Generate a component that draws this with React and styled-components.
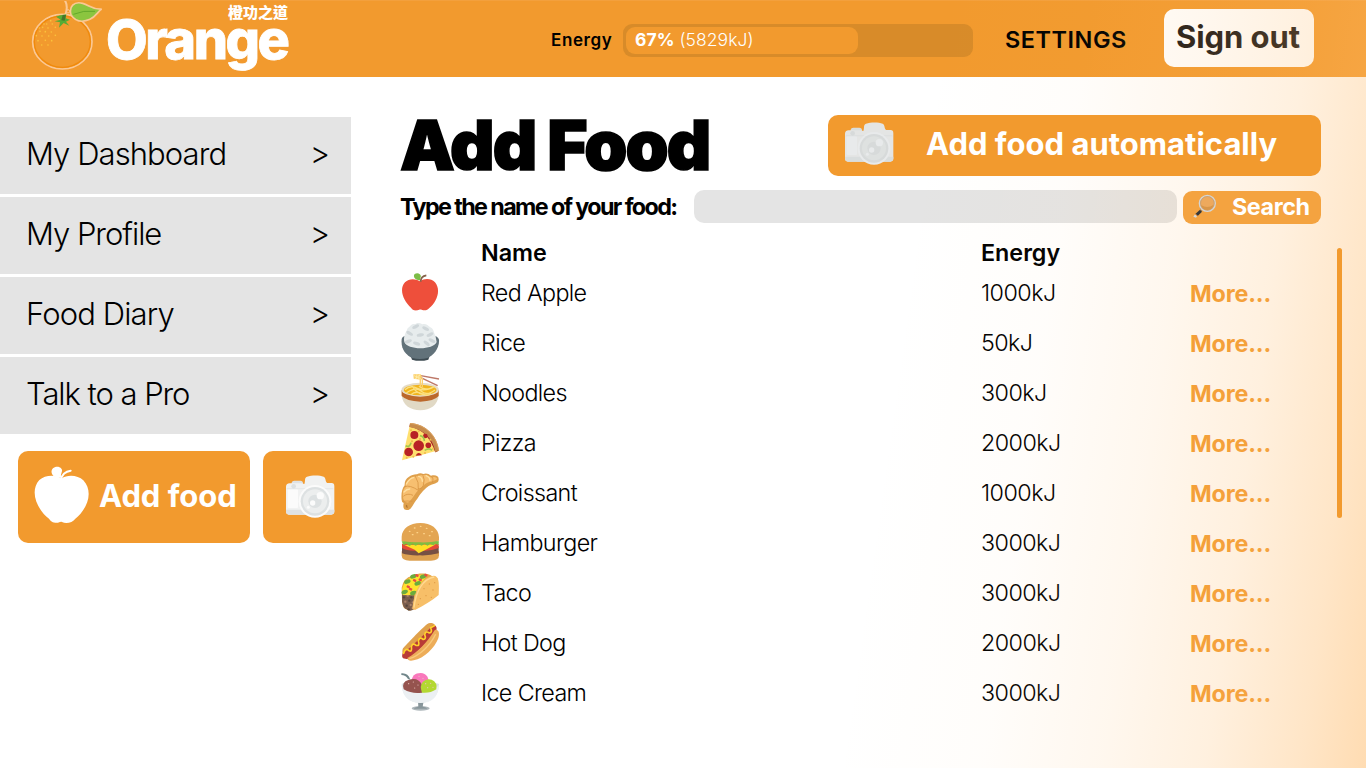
import React from "react";
import styled, { createGlobalStyle } from "styled-components";

const ORANGE = "#f29a2e";

const GlobalStyle = createGlobalStyle`
  * { box-sizing: border-box; }
  body { margin: 0; background: #fff; }
  button, input { font: inherit; border: 0; padding: 0; margin: 0; }
  svg { display: block; flex: none; }
`;

const Page = styled.div`
  position: relative;
  width: 1366px;
  height: 768px;
  overflow: hidden;
  background: #fff;
  color: #000;
  font-family: Inter, "Liberation Sans", "Noto Sans CJK TC", sans-serif;
`;

const Glow = styled.div`
  position: absolute;
  inset: 0;
  z-index: 1;
  pointer-events: none;
  background: linear-gradient(
    98deg,
    rgba(255, 188, 108, 0) 64%,
    rgba(255, 188, 108, 0.03) 74%,
    rgba(255, 188, 108, 0.115) 82%,
    rgba(255, 188, 108, 0.22) 89%,
    rgba(255, 188, 108, 0.38) 95.5%,
    rgba(255, 188, 108, 0.52) 100%
  );
`;

const Header = styled.header`
  display: flex;
  align-items: flex-start;
  height: 77px;
  background: ${ORANGE};
  border-top: 1px solid #f3a03d;
`;

const Brand = styled.div`
  display: flex;
  width: 551px;
  height: 76px;
  padding-left: 30px;
`;

const BrandText = styled.div`
  display: flex;
  flex-direction: column;
  align-items: flex-end;
  width: 182px;
  color: #fff;
`;

const BrandTag = styled.span`
  height: 15px;
  margin-top: 3px;
  font: 900 15px/15px "Noto Sans CJK TC", sans-serif;
  white-space: nowrap;
`;

const BrandName = styled.span`
  align-self: flex-start;
  font-size: 54px;
  font-weight: 800;
  line-height: 42px;
  letter-spacing: -2.5px;
  -webkit-text-stroke: 0.8px #fff;
  white-space: nowrap;
`;

const EnergyLabel = styled.span`
  width: 72px;
  margin-top: 28px;
  font-size: 17px;
  font-weight: 600;
  line-height: 22px;
  letter-spacing: 0.6px;
`;

const EnergyTrack = styled.div`
  width: 350px;
  height: 33px;
  margin-top: 23px;
  padding: 3px;
  border-radius: 9px;
  background: #d88b29;
`;

const EnergyFill = styled.div`
  height: 27px;
  padding-left: 9px;
  border-radius: 9px;
  background: ${ORANGE};
  color: #fff;
  font-size: 17.5px;
  font-weight: 300;
  line-height: 26px;
  letter-spacing: 0.05px;
  white-space: nowrap;
  b { font-weight: 700; }
`;

const Settings = styled.a`
  width: 159px;
  margin: 24px 0 0 32px;
  font-size: 23.5px;
  font-weight: 600;
  line-height: 30px;
  letter-spacing: 0.5px;
  white-space: nowrap;
`;

const SignOut = styled.button`
  width: 150px;
  height: 58px;
  margin-top: 8px;
  padding: 0 2px 4px 0;
  border-radius: 10px;
  background: #fff;
  color: #1b1715;
  font-size: 31px;
  font-weight: 650;
  letter-spacing: -0.05px;
  white-space: nowrap;
`;

const Body = styled.div`
  display: flex;
  align-items: flex-start;
`;

const Sidebar = styled.nav`
  width: 401px;
  padding-top: 40px;
`;

const NavItem = styled.a`
  display: flex;
  justify-content: space-between;
  width: 351px;
  height: 77px;
  margin-bottom: 3px;
  padding: 0 21px 0 26px;
  background: #e4e4e4;
  font-size: 31px;
  font-weight: 300;
  line-height: 74px;
  white-space: nowrap;
`;

const NavLabel = styled.span`
  letter-spacing: ${(p) => p.$spacing}px;
`;

const Chevron = styled.span`
  font-size: 31px;
  line-height: 72px;
`;

const QuickActions = styled.div`
  display: flex;
  gap: 13px;
  padding: 14px 0 0 18px;
`;

const QuickButton = styled.button`
  display: flex;
  align-items: flex-start;
  width: ${(p) => p.$width}px;
  height: 92px;
  padding: ${(p) => p.$pad};
  border-radius: 10px;
  background: ${ORANGE};
  color: #fff;
  font-size: 31px;
  font-weight: 700;
  line-height: 60px;
  letter-spacing: -0.05px;
  white-space: nowrap;
`;

const QuickLabel = styled.span`
  margin-left: 9px;
`;

const Main = styled.main`
  width: 941px;
  padding-top: 38px;
`;

const TitleRow = styled.div`
  display: flex;
  width: 920px;
  height: 61px;
`;

const Title = styled.h1`
  width: 428px;
  margin: 0 0 0 -1px;
  font-size: 69px;
  font-weight: 900;
  line-height: 61px;
  letter-spacing: -1.9px;
  -webkit-text-stroke: 1.6px #000;
  white-space: nowrap;
`;

const AutoButton = styled.button`
  position: relative;
  z-index: 2;
  display: flex;
  width: 493px;
  height: 61px;
  padding: 7px 0 0 16px;
  border-radius: 10px;
  background: ${ORANGE};
  color: #fff;
`;

const AutoLabel = styled.span`
  margin-left: 32px;
  font-size: 31px;
  font-weight: 700;
  line-height: 43px;
  white-space: nowrap;
`;

const SearchRow = styled.form`
  display: flex;
  width: 920px;
  height: 34px;
  margin-top: 14px;
`;

const SearchLabel = styled.label`
  width: 294px;
  margin-left: -1px;
  font-size: 23.3px;
  font-weight: 650;
  line-height: 34px;
  letter-spacing: -1.6px;
  white-space: nowrap;
`;

const SearchInput = styled.input`
  width: 483px;
  height: 33px;
  padding: 0 12px;
  border-radius: 10px;
  background: #e4e4e4;
`;

const SearchButton = styled.button`
  position: relative;
  z-index: 2;
  display: flex;
  width: 138px;
  height: 33px;
  margin: 1px 0 0 6px;
  padding: 2px 0 0 9px;
  border-radius: 9px;
  background: #f4a340;
  color: #fff;
  font-size: 23.3px;
  font-weight: 700;
  line-height: 28px;
  letter-spacing: -0.4px;
  white-space: nowrap;
`;

const SearchText = styled.span`
  margin-left: 16px;
`;

const Results = styled.div`
  display: flex;
  justify-content: space-between;
  margin-top: 14px;
`;

const Table = styled.div`
  width: 920px;
  padding-top: 2px;
`;

const Row = styled.div`
  display: grid;
  grid-template-columns: 80px 500px 209px 1fr;
  height: ${(p) => (p.$head ? 28 : 50)}px;
  font-size: 23.3px;
  font-weight: ${(p) => (p.$head ? 600 : 300)};
  line-height: ${(p) => (p.$head ? 26 : 50)}px;
`;

const IconCell = styled.span`
  padding-top: 5px;
`;

const Cell = styled.span`
  letter-spacing: ${(p) => p.$spacing || 0}px;
  white-space: nowrap;
`;

const More = styled.a`
  color: ${ORANGE};
  font-weight: 700;
  line-height: 52px;
  letter-spacing: -0.15px;
  white-space: nowrap;
`;

const Scrollbar = styled.div`
  position: relative;
  z-index: 2;
  width: 5px;
  height: 270px;
  margin-top: 10px;
  border-radius: 3px;
  background: ${ORANGE};
`;

function OrangeLogo() {
  const dots = [
    [152, 62], [140, 72], [157, 72], [128, 82], [144, 84], [166, 82], [120, 94], [136, 95],
    [154, 96], [109, 107], [126, 108], [146, 108], [166, 106], [114, 122], [136, 121],
    [155, 122], [125, 135], [144, 135], [132, 72], [118, 84],
  ];
  return (
    <svg width="76" height="76" viewBox="90 3 228 228">
      <path d="M196 44C202 28 203 14 194 0" fill="none" stroke="#fbc894" strokeWidth="6" />
      <ellipse cx="187" cy="125" rx="89" ry="82" fill="#f29a2e" stroke="#fbc894" strokeWidth="5" />
      <ellipse cx="187" cy="125" rx="84" ry="77" fill="none" stroke="#f08a0c" strokeWidth="4" />
      {dots.map(([x, y]) => <circle key={`${x}-${y}`} cx={x} cy={y} r="2.5" fill="#fbc23c" />)}
      <path d="M213 45C206 20 222 3 248 10C268 15 276 29 305 27C294 34 288 50 270 58C247 68 226 64 213 45Z" fill="#8bc53f" stroke="#fbc894" strokeWidth="5" />
      <path d="M220 43Q250 30 285 34" fill="none" stroke="#64a92b" strokeWidth="3" />
      <path d="M182 46L199 43 197 55 210 59 198 65 208 77 191 69 177 83 180 67 164 64 182 59 168 50Z" fill="#55ac35" />
      <path d="M184 61L188 45H198L194 62Z" fill="#45752b" />
      <circle cx="204" cy="34" r="5" fill="none" stroke="#fbc894" strokeWidth="3" />
    </svg>
  );
}

function CameraIcon({ muted }) {
  const body = muted ? "#e4e5e4" : "#f1f2f2";
  const edge = muted ? "#d9dddd" : "#dfe2e4";
  const lens = muted ? "#d7dada" : "#dde1e2";
  const light = muted ? "#e8eaeb" : "#fbfbfb";
  return (
    <svg width="50" height="43" viewBox="0 0 150 129">
      <rect x="20" y="17" width="34" height="20" rx="8" fill={edge} />
      <path d="M58 27C62 18 57 9 66 5C80 0 104 0 116 5C124 9 120 21 127 24H140Q148 24 148 34V109Q148 119 139 119H11Q3 119 3 109V36Q3 25 14 25H51Q56 27 58 27Z" fill={body} />
      <path d="M3 104V109Q3 119 13 119H138Q148 119 148 109V104Z" fill={edge} />
      <rect x="8" y="43" width="31" height="56" rx="3" fill={light} />
      <path d="M5 41H145" stroke={edge} strokeWidth="2" />
      <circle cx="26" cy="34" r="7" fill={lens} />
      <circle cx="90" cy="79" r="49" fill={light} />
      <circle cx="90" cy="79" r="43" fill={lens} />
      <circle cx="90" cy="79" r="36" fill={muted ? "#dee1e0" : "#eceeee"} />
      <circle cx="90" cy="79" r="20" fill={lens} />
      <circle cx="106" cy="62" r="11" fill={light} />
      <circle cx="83" cy="84" r="8" fill={light} />
      <circle cx="70" cy="97" r="4.5" fill={light} />
    </svg>
  );
}

function WhiteApple() {
  return (
    <svg width="56" height="58" viewBox="2 0 168 174" fill="#fff">
      <path d="M84 38C104 24 134 28 150 43C184 80 158 133 126 158C118 170 98 175 86 168C80 165 77 172 66 170C54 168 52 164 47 158C12 132-13 76 18 42C34 28 65 24 84 38Z" />
      <path d="M75 35C55 34 49 15 60 6C72-3 88 5 86 15C84 24 81 28 84 35Z" />
      <path d="M82 42Q88 17 112 14" fill="none" stroke="#fff" strokeWidth="6" strokeLinecap="round" />
    </svg>
  );
}

function MagnifierIcon() {
  return (
    <svg width="24" height="26" viewBox="0 -2 72 78">
      <path d="M10 61L24 48 30 54 17 67Z" fill="#35383a" />
      <path d="M9 62L15 68 12 72 4 69Z" fill="#d5d8da" />
      <path d="M11 61L17 67" stroke="#e78b38" strokeWidth="2" />
      <path d="M24 47L34 38M28 51L36 43" stroke="#777" strokeWidth="3" />
      <circle cx="46" cy="29" r="24" fill="#eda95d" stroke="#d3d5d6" strokeWidth="4" />
      <circle cx="46" cy="29" r="20.5" fill="none" stroke="#a5988a" strokeWidth="1.5" />
      <path d="M27 34Q46 46 65 33Q60 49 46 49Q31 49 27 34Z" fill="#d99648" />
    </svg>
  );
}

const Food = ({ children }) => (
  <svg width="39" height="39" viewBox="1 0 117 117">{children}</svg>
);

const RedApple = () => (
  <Food>
    <path d="M58 25C72 15 91 16 103 28C123 52 107 88 86 105C80 112 72 114 63 110C58 108 56 110 51 112C40 114 34 109 31 104C10 87-7 50 13 28C25 16 45 17 58 25Z" fill="#ee4f3b" />
    <path d="M56 22C42 21 36 10 42 3C52-3 63 4 60 13Q57 19 59 23Z" fill="#7dbd47" />
    <path d="M60 26Q60 10 77 7" fill="none" stroke="#856249" strokeWidth="5" />
  </Food>
);

const Rice = () => (
  <Food>
    <path d="M31 102H86L83 110Q58 117 34 110Z" fill="#3e4b52" />
    <path d="M3 49C5 39 12 35 58 35S111 39 115 50C117 75 99 96 81 105Q58 111 34 105C14 95 0 76 3 49Z" fill="#62727a" />
    <path d="M10 51C10 33 18 25 21 16C31 8 34 1 43 4C50-3 59 0 65 4C76 1 82 8 89 13C101 19 99 31 104 37L108 57C98 82 20 82 11 57Z" fill="#e7eced" />
    {[[45, 11, -25], [75, 17, 25], [27, 31, 30], [59, 36, -10], [88, 35, -25], [23, 55, -20], [48, 62, 18], [78, 61, 40], [94, 53, 25]].map(([x, y, r]) => (
      <ellipse key={`${x}-${y}`} cx={x} cy={y} rx="11" ry="5" fill="#cfd6d9" transform={`rotate(${r} ${x} ${y})`} />
    ))}
  </Food>
);

const Noodles = () => (
  <Food>
    <path d="M3 53V66C5 96 29 112 59 112S112 96 114 66V53Z" fill="#e1d9c5" />
    <path d="M3 51V69Q17 84 59 86Q101 84 114 69V51Z" fill="#bb682c" />
    <ellipse cx="58.500" cy="50" rx="56" ry="21" fill="#e5dcc7" />
    <ellipse cx="58.500" cy="51" rx="49" ry="16" fill="#f0b41e" />
    <path d="M13 50Q29 35 50 46T101 41M17 60Q45 40 62 55T103 51M35 39Q46 61 69 65M31 65Q44 52 64 62T91 60M55 40Q67 51 89 46" fill="none" stroke="#fce07f" strokeWidth="4" />
    <path d="M56 7L115 18M59 13L111 38" stroke="#bd7868" strokeWidth="4" />
    <path d="M38 4L60 3 64 11 62 20 39 17Z" fill="#fbd06e" />
    <path d="M59 15V43M65 15V43" stroke="#fbd06e" strokeWidth="4" />
    <path d="M40 8L60 17M43 17L61 4M49 3L46 19M56 3L54 20" stroke="#fff1b5" strokeWidth="2" />
  </Food>
);

const Pizza = () => (
  <Food>
    <path d="M4 112L27 8Q85 17 106 84L4 112Z" fill="#ffe06f" />
    <path d="M27 8Q84 17 107 87" fill="none" stroke="#a71b24" strokeWidth="7" />
    <path d="M28 0C78 4 110 40 115 83L104 88C98 47 69 19 26 12Z" fill="#c68b4b" />
    <path d="M28 1C78 5 108 40 114 83" fill="none" stroke="#dca362" strokeWidth="3" />
    {[[41, 36, 12], [54, 68, 16], [24, 87, 13], [83, 67, 8.500], [74, 39, 7]].map(([x, y, r]) => <circle key={x} cx={x} cy={y} r={r} fill="#b82226" />)}
    <path d="M45 98Q50 85 62 94L64 97Z" fill="#b82226" />
    <path d="M58 38Q71 41 71 54M15 68Q28 75 31 59M72 82Q86 73 94 82" fill="none" stroke="#9fc74d" strokeWidth="5" />
    {[[31, 22], [54, 25], [34, 55], [58, 48], [73, 90], [38, 101], [89, 50], [97, 77], [18, 104]].map(([x, y]) => <circle key={`${x}-${y}`} cx={x} cy={y} r="3" fill="#efb94e" />)}
  </Food>
);

const Croissant = () => (
  <Food>
    <path d="M3 81C1 67 3 47 12 37C10 15 34 3 49 4Q58-2 68 3Q80-1 91 8C104 5 115 8 114 20C113 33 97 30 84 39Q65 52 50 77C37 91 33 113 18 111C7 111 7 100 9 90Q3 89 3 81Z" fill="#dfa04c" />
    <path d="M7 73Q4 52 15 41C13 22 36 8 49 10Q75 0 93 14Q105 8 110 18C96 28 83 23 67 39C43 57 39 74 24 88Q9 91 7 73Z" fill="#f7bf70" />
    <path d="M13 41Q27 35 53 52Q56 27 43 8M52 47Q64 49 68 37Q74 20 66 4M92 10Q101 16 94 30M8 70Q21 59 37 67M7 85Q21 83 35 85" fill="none" stroke="#d99543" strokeWidth="2.500" />
    <path d="M17 33Q28 14 39 14M54 10Q65 13 65 25M76 8Q88 13 88 22M10 57Q18 48 27 48" fill="none" stroke="#ffe0a1" strokeWidth="4" strokeLinecap="round" />
    <path d="M18 96Q16 102 21 103" fill="none" stroke="#b57732" strokeWidth="4" />
  </Food>
);

const Hamburger = () => (
  <Food>
    <path d="M3 85H115V97Q115 113 91 113H27Q3 113 3 97Z" fill="#dda151" />
    <path d="M4 70Q58 60 114 70V91Q88 98 58 97Q25 98 4 91Z" fill="#765044" />
    <path d="M4 62Q59 54 114 62V75Q86 86 58 82Q22 86 4 75Z" fill="#e44936" />
    <path d="M11 66L106 64 75 80 54 91 42 80Z" fill="#ffdf24" />
    <path d="M3 55Q59 48 115 55L113 66 104 62 98 67 88 63 81 68 71 63 63 68 54 64 45 68 36 64 26 69 18 63 8 66Z" fill="#7fbd42" />
    <path d="M3 54V41C4 17 27 0 59 0S114 17 115 42V53Q91 59 59 58Q23 58 3 54Z" fill="#e3a552" />
    {[[27, 25], [42, 15], [60, 10], [78, 16], [94, 26], [50, 29], [70, 32], [36, 35], [87, 38]].map(([x, y]) => <ellipse key={x} cx={x} cy={y} rx="3" ry="2" fill="#ffd68d" />)}
  </Food>
);

const Taco = () => (
  <Food>
    <path d="M3 44Q8 14 35 8C60-3 89 2 98 13L40 108Q27 116 16 109C5 104 6 91 4 84Z" fill="#e6a846" />
    <path d="M4 62L41 54 40 109Q27 118 17 108C8 106 7 95 4 86Z" fill="#7a5d4d" />
    {[[10, 73], [21, 68], [32, 73], [14, 86], [26, 83], [37, 88], [18, 98], [30, 96], [24, 109], [36, 105]].map(([x, y], i) => <circle key={i} cx={x} cy={y} r="3.500" fill={i % 2 ? "#a9806a" : "#54443d"} />)}
    <path d="M4 49Q11 23 27 16L52 5 83 5 61 29 41 67 6 66Z" fill="#ffe22f" />
    {[[12, 57], [38, 60], [20, 26], [51, 31], [67, 11], [38, 10]].map(([x, y]) => <ellipse key={x} cx={x} cy={y} rx="10" ry="6" fill="#6cab3d" transform={`rotate(-20 ${x} ${y})`} />)}
    {[[23, 41], [42, 22], [59, 20], [76, 6], [49, 7], [30, 48]].map(([x, y]) => <rect key={x} x={x - 5} y={y - 3} width="10" height="7" rx="2" fill="#e94c42" transform={`rotate(25 ${x} ${y})`} />)}
    <path d="M35 108C39 53 62 15 99 8C114 9 116 23 114 66C95 83 70 97 43 111Z" fill="#f7bf68" />
    <path d="M40 104C46 53 67 18 101 12" fill="none" stroke="#ffda91" strokeWidth="4" />
    {[[70, 47], [86, 33], [97, 51], [76, 68], [59, 77], [92, 73], [102, 29], [53, 94]].map(([x, y]) => <circle key={x} cx={x} cy={y} r="2" fill="#df9a44" />)}
  </Food>
);

const HotDog = () => (
  <Food>
    <path d="M7 76C19 64 59 19 80 3C91-4 105 1 106 14L24 104C9 102 1 90 7 76Z" fill="#e0a14c" />
    <path d="M6 91C42 65 71 33 97 7C110 7 111 19 102 32C77 62 51 87 22 108C5 109 2 103 6 91Z" fill="#b93b36" />
    <path d="M20 105C51 87 78 60 103 20C116 19 117 32 113 46C101 76 71 106 39 112Q22 116 20 105Z" fill="#edad59" />
    <path d="M26 107C56 98 88 69 105 34" fill="none" stroke="#f9ca7d" strokeWidth="4" />
    <path d="M9 91Q15 72 25 83Q35 88 32 71Q36 58 46 67Q59 70 53 54Q57 40 67 49Q78 50 72 35Q75 22 86 30Q96 29 90 14L101 8" fill="none" stroke="#ffd12c" strokeWidth="5" strokeLinecap="round" />
  </Food>
);

const IceCream = () => (
  <Food>
    <ellipse cx="60" cy="106" rx="27" ry="7" fill="#adb6ba" />
    <path d="M52 84H69L66 101Q78 103 80 107H39Q43 103 53 101Z" fill="#88969b" />
    <path d="M3 34Q3 27 58 28T115 34C114 68 94 90 59 90S4 67 3 34Z" fill="#dbe3e6" />
    <path d="M33 27C32 10 43 0 60 0C78 1 85 14 84 32L60 45Z" fill="#f978bc" />
    <path d="M3 34C12 67 102 68 114 34V44C109 75 91 90 59 90S6 72 3 40Z" fill="#eef2f4" opacity=".85" />
    <path d="M9 49Q2 26 23 21Q52 11 64 36V59Q35 64 9 49Z" fill="#95534e" />
    <path d="M64 59Q56 39 66 27Q78 15 93 20Q111 28 107 49Q87 62 64 59Z" fill="#b3d832" />
    <path d="M2 1Q22-1 29 20L22 18Q15 6 2 6Z" fill="#71868a" />
    {[[24, 32], [38, 27], [52, 36], [42, 45], [75, 32], [90, 31], [81, 44], [97, 43], [55, 10], [67, 16]].map(([x, y]) => <circle key={x} cx={x} cy={y} r="1.800" fill="#e9c4bb" />)}
  </Food>
);

const NAV = [
  ["My Dashboard", -0.92],
  ["My Profile", -1.03],
  ["Food Diary", -0.88],
  ["Talk to a Pro", -1.05],
];

const FOODS = [
  [RedApple, "Red Apple", "1000kJ"],
  [Rice, "Rice", "50kJ"],
  [Noodles, "Noodles", "300kJ"],
  [Pizza, "Pizza", "2000kJ"],
  [Croissant, "Croissant", "1000kJ"],
  [Hamburger, "Hamburger", "3000kJ"],
  [Taco, "Taco", "3000kJ"],
  [HotDog, "Hot Dog", "2000kJ"],
  [IceCream, "Ice Cream", "3000kJ"],
];

export default function App() {
  const energy = 67;
  return (
    <Page>
      <GlobalStyle />
      <Header>
        <Brand>
          <OrangeLogo />
          <BrandText>
            <BrandTag>橙功之道</BrandTag>
            <BrandName>Orange</BrandName>
          </BrandText>
        </Brand>
        <EnergyLabel>Energy</EnergyLabel>
        <EnergyTrack>
          <EnergyFill style={{ width: `${energy + 0.5}%` }}>
            <b>{energy}%</b> (5829kJ)
          </EnergyFill>
        </EnergyTrack>
        <Settings>SETTINGS</Settings>
        <SignOut>Sign out</SignOut>
      </Header>
      <Body>
        <Sidebar>
          {NAV.map(([label, spacing]) => (
            <NavItem key={label}>
              <NavLabel $spacing={spacing}>{label}</NavLabel>
              <Chevron>&gt;</Chevron>
            </NavItem>
          ))}
          <QuickActions>
            <QuickButton $width={232} $pad="15px 0 0 16px">
              <WhiteApple />
              <QuickLabel>Add food</QuickLabel>
            </QuickButton>
            <QuickButton $width={89} $pad="24px 0 0 22px">
              <CameraIcon />
            </QuickButton>
          </QuickActions>
        </Sidebar>
        <Main>
          <TitleRow>
            <Title>Add Food</Title>
            <AutoButton>
              <CameraIcon muted />
              <AutoLabel>Add food automatically</AutoLabel>
            </AutoButton>
          </TitleRow>
          <SearchRow>
            <SearchLabel htmlFor="food">Type the name of your food:</SearchLabel>
            <SearchInput id="food" />
            <SearchButton type="button">
              <MagnifierIcon />
              <SearchText>Search</SearchText>
            </SearchButton>
          </SearchRow>
          <Results>
            <Table>
              <Row $head>
                <span />
                <Cell>Name</Cell>
                <Cell>Energy</Cell>
              </Row>
              {FOODS.map(([Icon, name, kj]) => (
                <Row key={name}>
                  <IconCell><Icon /></IconCell>
                  <Cell $spacing={-0.64}>{name}</Cell>
                  <Cell $spacing={-0.55}>{kj}</Cell>
                  <More>More...</More>
                </Row>
              ))}
            </Table>
            <Scrollbar />
          </Results>
        </Main>
      </Body>
      <Glow />
    </Page>
  );
}
